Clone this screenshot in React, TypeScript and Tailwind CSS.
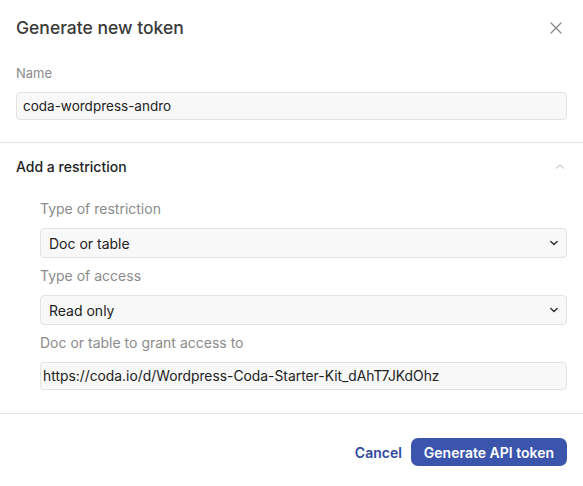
import React from "react";

function Chevron({ className }: { className?: string }) {
  return (
    <svg viewBox="0 0 10 6" className={className} fill="none">
      <path d="M1 1l4 4 4-4" stroke="currentColor" strokeWidth="1.8" strokeLinecap="round" strokeLinejoin="round" />
    </svg>
  );
}

function SelectBox({ value }: { value: string }) {
  return (
    <div className="relative">
      <select
        defaultValue={value}
        className="block w-full h-[30px] appearance-none rounded-[4px] border border-[#e3e3e3] bg-[#f8f8f8] pl-[8px] pr-8 text-[14px] text-[#222] outline-none"
      >
        <option>{value}</option>
      </select>
      <Chevron className="pointer-events-none absolute right-[9px] top-[12px] w-[8px] h-[6px] text-[#333]" />
    </div>
  );
}

export default function App() {
  return (
    <div className="w-[583px] h-[486px] bg-white font-['Inter',sans-serif] text-[#333]">
      <div className="flex items-center justify-between px-4 pt-[17px] h-[55px] pb-[16px]">
        <h2 className="text-[17.5px] font-medium text-[#3a3a3a]">Generate new token</h2>
        <button aria-label="Close" className="mr-[5px] text-[#8c8c8c]">
          <svg viewBox="0 0 12 12" className="w-[12px] h-[12px]" fill="none">
            <path d="M1 1l10 10M11 1L1 11" stroke="currentColor" strokeWidth="1.4" strokeLinecap="round" />
          </svg>
        </button>
      </div>

      <div className="px-4 pb-[22px]">
        <label className="block text-[13px] text-[#8b8b8b] leading-[18px] mt-[9px] mb-[10px]">Name</label>
        <input
          defaultValue="coda-wordpress-andro"
          className="block w-full h-[28px] rounded-[4px] border border-[#e3e3e3] bg-[#f8f8f8] px-[6px] text-[13.5px] text-[#222] outline-none"
        />
      </div>

      <div className="border-t border-[#e2e2e2]" />

      <div className="px-4">
        <div className="flex items-center justify-between h-[46px] pt-[1px]">
          <span className="text-[14px] font-medium text-[#222]">Add a restriction</span>
          <Chevron className="w-[8px] h-[5px] mr-[3px] rotate-180 text-[#cfcfcf]" />
        </div>

        <div className="pl-6 pb-[23px]">
          <label className="block text-[14px] text-[#8b8b8b] leading-[20px] mt-[10px] mb-[9px]">Type of restriction</label>
          <SelectBox value="Doc or table" />
          <label className="block text-[14px] text-[#8b8b8b] leading-[20px] mt-[8px] mb-[9px]">Type of access</label>
          <SelectBox value="Read only" />
          <label className="block text-[14px] text-[#8b8b8b] leading-[20px] mt-[8px] mb-[9px]">Doc or table to grant access to</label>
          <input
            defaultValue="https://coda.io/d/Wordpress-Coda-Starter-Kit_dAhT7JKdOhz"
            className="block w-full h-[28px] rounded-[4px] border border-[#e3e3e3] bg-[#f8f8f8] px-[2px] text-[13.85px] text-[#222] outline-none"
          />
        </div>
      </div>

      <div className="border-t border-[#e2e2e2]" />

      <div className="flex items-center justify-end gap-[9px] px-4 pt-[24px]">
        <button className="text-[14px] font-semibold text-[#2f4aa0]">Cancel</button>
        <button className="h-[28px] rounded-[7px] bg-[#3b55ad] px-[13px] text-[14px] font-semibold text-white">
          Generate API token
        </button>
      </div>
    </div>
  );
}
